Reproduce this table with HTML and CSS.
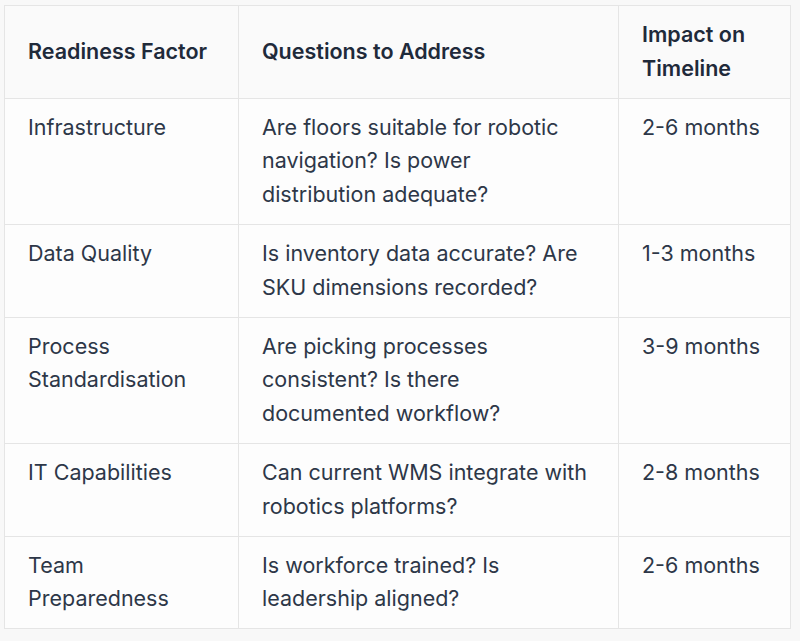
FILE: index.html
```html
<!DOCTYPE html>
<html>
<head>
<meta charset="utf-8">
<link rel="stylesheet" href="styles.css">
</head>
<body>
<table class="readiness">
  <colgroup>
    <col class="c1">
    <col class="c2">
    <col class="c3">
  </colgroup>
  <thead>
    <tr>
      <th>Readiness Factor</th>
      <th class="q">Questions to Address</th>
      <th>Impact on Timeline</th>
    </tr>
  </thead>
  <tbody>
    <tr>
      <td>Infrastructure</td>
      <td class="q">Are floors suitable for robotic navigation? Is power distribution adequate?</td>
      <td>2-6 months</td>
    </tr>
    <tr>
      <td>Data Quality</td>
      <td class="q">Is inventory data accurate? Are SKU dimensions recorded?</td>
      <td>1-3 months</td>
    </tr>
    <tr>
      <td>Process Standardisation</td>
      <td class="q">Are picking processes consistent? Is there documented workflow?</td>
      <td>3-9 months</td>
    </tr>
    <tr>
      <td>IT Capabilities</td>
      <td class="q">Can current WMS integrate with robotics platforms?</td>
      <td>2-8 months</td>
    </tr>
    <tr>
      <td>Team Preparedness</td>
      <td class="q">Is workforce trained? Is leadership aligned?</td>
      <td>2-6 months</td>
    </tr>
  </tbody>
</table>
</body>
</html>
```
FILE: styles.css
```css
html, body {
  margin: 0;
  padding: 0;
  background: #f8f8f8;
}
body {
  padding: 5px 0 0 4px;
  font-family: Inter, "Noto Sans", sans-serif;
  color: #2d3748;
}
.readiness {
  border-collapse: collapse;
  table-layout: fixed;
  width: 786px;
  background: #fdfdfd;
  border: 1px solid #e5e5e5;
  font-size: 21.5px;
  line-height: 33.8px;
}
.c1 { width: 234px; }
.c2 { width: 380px; }
.c3 { width: 172px; }
.readiness th,
.readiness td {
  border: 1px solid #e5e5e5;
  padding: 12px 20px 12px 23px;
  text-align: left;
  vertical-align: top;
}
.readiness .q {
  padding-right: 30px;
}
.readiness th {
  background: #fafafa;
  font-weight: 600;
  color: #1f2a3a;
  vertical-align: middle;
}
```
